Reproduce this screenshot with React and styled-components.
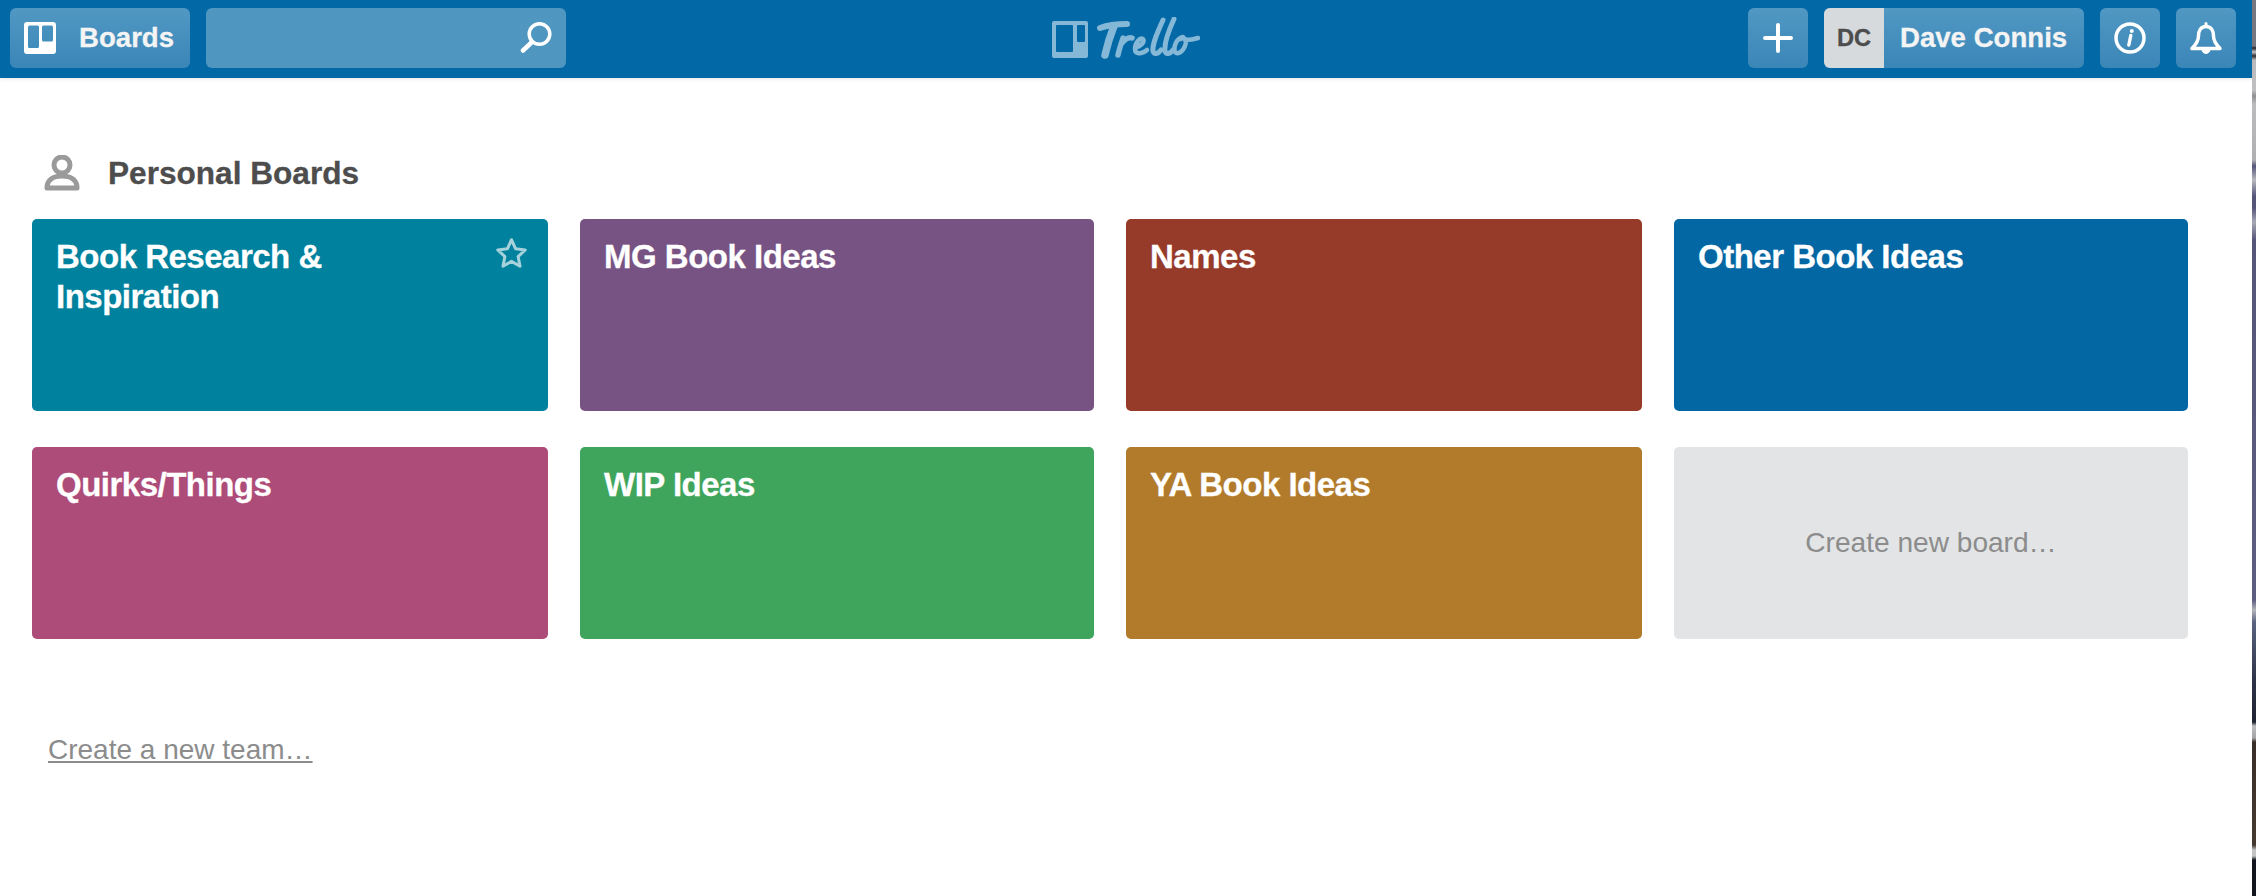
import React from 'react';
import styled, { createGlobalStyle } from 'styled-components';

const GlobalStyle = createGlobalStyle`
  html, body {
    margin: 0;
    padding: 0;
    height: 100%;
    overflow: hidden;
    background: #fff;
  }
  #root { height: 100%; }
  * { box-sizing: border-box; }
`

const Screen = styled.div`
  display: flex;
  width: 2256px;
  height: 896px;
  font-family: 'Liberation Sans', Arial, sans-serif;
`

const Page = styled.div`
  flex: 1;
  min-width: 0;
  display: flex;
  flex-direction: column;
`

const DesktopEdge = styled.div`
  width: 4px;
  flex-shrink: 0;
  background: linear-gradient(
    to bottom,
    #77777f 0, #77777f 46px, #26262c 48px, #c4c4c6 52px, #2c2c34 56px, #b9b9bc 60px,
    #c0c0c2 90px, #8f8f92 96px, #bcbcbe 104px, #b0b0b2 160px, #55557a 166px,
    #b8b8c0 180px, #55557a 196px, #55557a 208px, #a8a8b4 222px, #55557a 240px,
    #5d5d80 600px, #b4b4ba 610px, #5a6480 622px, #2e3448 680px, #1f2230 722px,
    #bcbcbe 726px, #a4a4a6 738px, #3a2f28 742px, #453930 845px, #c4c4c6 850px,
    #c4c4c6 856px, #14161f 860px, #14161f 896px
  );
`

const Header = styled.header`
  height: 78px;
  flex-shrink: 0;
  display: grid;
  grid-template-columns: 1fr auto 1fr;
  align-items: center;
  padding: 0 16px 2px 10px;
  background-color: #0268a6;
  box-shadow: 0 1px 4px rgba(0, 0, 0, 0.1);
`

const HeaderGroup = styled.div`
  display: flex;
  align-items: center;
  justify-content: ${props => props.$align};
  gap: 16px;
`

const HeaderButton = styled.div`
  display: flex;
  align-items: center;
  height: 60px;
  width: ${props => props.$width}px;
  justify-content: ${props => (props.$width === 60 ? 'center' : 'flex-start')};
  border-radius: 6px;
  color: #f4f4f4;
  font-size: 27.6px;
  font-weight: bold;
  -webkit-text-stroke: 0.3px #f4f4f4;
  background: linear-gradient(to bottom, #5198c3, #3a86b8);
  overflow: hidden;
`

const BoardsIcon = styled.svg`
  margin: 0 23px 0 14px;
`

const SearchBox = styled.div`
  display: flex;
  align-items: center;
  justify-content: flex-end;
  width: 360px;
  height: 60px;
  padding-right: 14px;
  border-radius: 6px;
  background: #4f96c1;
`

const Logo = styled.div`
  display: flex;
  align-items: center;
  margin-left: 6px;
`

const Avatar = styled.div`
  display: flex;
  align-items: center;
  justify-content: center;
  width: 60px;
  height: 60px;
  background: #d6dadc;
  color: #4d4d4d;
  font-size: 23.7px;
  font-weight: bold;
  -webkit-text-stroke: 0.3px #4d4d4d;
`

const UserName = styled.span`
  padding-left: 16px;
`

const Content = styled.main`
  flex: 1;
  padding: 0 0 0 32px;
`

const SectionTitle = styled.div`
  display: flex;
  align-items: center;
  height: 60px;
  margin-top: 65px;
  margin-bottom: 16px;
  padding-left: 12px;
  color: #4d4d4d;
  font-size: 31.6px;
  font-weight: bold;
  -webkit-text-stroke: 0.3px #4d4d4d;
`

const TitleText = styled.h2`
  margin: 0 0 0 28px;
  font: inherit;
`

const BoardGrid = styled.div`
  display: grid;
  grid-template-columns: 516px 514px 516px 514px;
  grid-auto-rows: 192px;
  gap: 36px 32px;
`

const BoardCard = styled.div`
  display: flex;
  justify-content: space-between;
  align-items: flex-start;
  padding: 18px 20px 20px 24px;
  border-radius: 5px;
  background: ${props => props.$color};
  color: #fff;
  font-size: 33px;
  font-weight: bold;
  letter-spacing: -0.5px;
  line-height: 40px;
  -webkit-text-stroke: 0.3px #fff;
`

const BoardName = styled.span`
  width: 300px;
  white-space: ${props => (props.$wrap ? 'normal' : 'nowrap')};
`

const NewBoard = styled.div`
  display: flex;
  align-items: center;
  justify-content: center;
  border-radius: 5px;
  background: #e2e4e6;
  color: #8c8c8c;
  font-size: 28.1px;
`

const TeamLink = styled.a`
  display: inline-block;
  margin: 93px 0 0 16px;
  color: #8c8c8c;
  font-size: 28px;
  line-height: 36px;
  text-decoration: underline;
`

const boards = [
  { name: 'Book Research & Inspiration', color: '#00819d', star: true },
  { name: 'MG Book Ideas', color: '#775384' },
  { name: 'Names', color: '#963a2a' },
  { name: 'Other Book Ideas', color: '#0267a3' },
  { name: 'Quirks/Things', color: '#ad4c79' },
  { name: 'WIP Ideas', color: '#40a55c' },
  { name: 'YA Book Ideas', color: '#b27b2c' },
]

const App = () => {
  return (
    <Screen>
      <GlobalStyle />
      <Page>
        <Header>
          <HeaderGroup $align="flex-start">
            <HeaderButton $width={180}>
              <BoardsIcon width="32" height="32" viewBox="0 0 32 32">
                <path fill="#fff" fillRule="evenodd" d="M3 0h26a3 3 0 0 1 3 3v26a3 3 0 0 1-3 3H3a3 3 0 0 1-3-3V3a3 3 0 0 1 3-3zM5.500 3.500a1.500 1.500 0 0 0-1.500 1.500v19.500a1.500 1.500 0 0 0 1.500 1.500h8a1.500 1.500 0 0 0 1.500-1.500V5a1.500 1.500 0 0 0-1.500-1.500zM19.500 3.500a1.500 1.500 0 0 0-1.500 1.500v13a1.500 1.500 0 0 0 1.500 1.500h8a1.500 1.500 0 0 0 1.500-1.500V5a1.500 1.500 0 0 0-1.500-1.500z" />
              </BoardsIcon>
              Boards
            </HeaderButton>
            <SearchBox>
              <svg width="32" height="32" viewBox="0 0 32 32" fill="none" stroke="#fff" strokeLinecap="round">
                <circle cx="19.500" cy="12" r="10.300" strokeWidth="3.500" />
                <path d="M11.500 20.500L3 28.500" strokeWidth="4.500" />
              </svg>
            </SearchBox>
          </HeaderGroup>
          <Logo>
            <svg width="148" height="42" viewBox="0 0 148 42" fill="#85b7d6">
              <path fillRule="evenodd" d="M2 4h32a2 2 0 0 1 2 2v33a2 2 0 0 1-2 2H2a2 2 0 0 1-2-2V6a2 2 0 0 1 2-2zM5 8a1 1 0 0 0-1 1v25a1 1 0 0 0 1 1h15a1 1 0 0 0 1-1V9a1 1 0 0 0-1-1zM26 8a1 1 0 0 0-1 1v15a1 1 0 0 0 1 1h6a1 1 0 0 0 1-1V9a1 1 0 0 0-1-1z" />
              <g fill="none" stroke="#85b7d6" strokeLinecap="round" strokeLinejoin="round">
                <path d="M48 11C56 8 66 7 75 7" strokeWidth="6" />
                <path d="M62 9C58 19 55 29 53 38" strokeWidth="7.500" />
                <path d="M71 21C69 27 67 33 66 38M69 27C73 22 77 20 80 21" strokeWidth="5.500" />
                <path d="M83 31C89 29 93 25 91 22C88 20 83 26 83 32C83 37 89 38 95 33" strokeWidth="4.500" />
                <path d="M111 3C106 14 100 27 101 34C102 38 106 37 109 33" strokeWidth="5" />
                <path d="M122 2C117 13 112 27 113 34C114 38 118 37 121 33" strokeWidth="5" />
                <path d="M131 20C125 21 121 29 123 35C126 39 133 33 134 25C134 21 131 20 129 22M133 23C138 23 143 22 146 21" strokeWidth="4.500" />
              </g>
            </svg>
          </Logo>
          <HeaderGroup $align="flex-end">
            <HeaderButton $width={60}>
              <svg width="30" height="30" viewBox="0 0 30 30" stroke="#fff" strokeWidth="4" strokeLinecap="round">
                <path d="M15 2v26M2 15h26" />
              </svg>
            </HeaderButton>
            <HeaderButton $width={260}>
              <Avatar>DC</Avatar>
              <UserName>Dave Connis</UserName>
            </HeaderButton>
            <HeaderButton $width={60}>
              <svg width="32" height="32" viewBox="0 0 32 32" fill="none">
                <circle cx="16" cy="16" r="14" stroke="#fff" strokeWidth="3.500" />
                <path d="M16.800 13.500L14.800 23" stroke="#fff" strokeWidth="3.400" strokeLinecap="round" />
                <circle cx="17.800" cy="9" r="2" fill="#fff" />
              </svg>
            </HeaderButton>
            <HeaderButton $width={60}>
              <svg width="32" height="32" viewBox="0 0 32 32" fill="none" stroke="#fff" strokeLinejoin="round" strokeLinecap="round">
                <path d="M16 4.500C10.500 4.500 8.500 9 8.500 14C8.500 19 6 22.500 2 26.500H30C26 22.500 23.500 19 23.500 14C23.500 9 21.500 4.500 16 4.500Z" strokeWidth="3.500" />
                <path d="M16 1.500v3" strokeWidth="3" />
                <path d="M12 27.500a4 4 0 0 0 8 0z" fill="#fff" strokeWidth="1" />
              </svg>
            </HeaderButton>
          </HeaderGroup>
        </Header>
        <Content>
          <SectionTitle>
            <svg width="36" height="36" viewBox="0 0 36 36" fill="none" stroke="#9a9a9a" strokeWidth="5" strokeLinejoin="round">
              <ellipse cx="18" cy="10" rx="8" ry="8" />
              <path d="M3 33C3 25 9 21 18 21C27 21 33 25 33 33Z" />
            </svg>
            <TitleText>Personal Boards</TitleText>
          </SectionTitle>
          <BoardGrid>
            {boards.map(board => (
              <BoardCard key={board.name} $color={board.color}>
                <BoardName $wrap={board.star}>{board.name}</BoardName>
                {board.star && (
                  <svg width="33" height="33" viewBox="0 0 24 24" fill="none" stroke="#a6d2dc" strokeWidth="2.200" strokeLinejoin="round">
                    <path d="M12 2l3 6.600 7 .8-5.200 4.800 1.400 7.100L12 17.700l-6.200 3.600 1.400-7.100L2 9.400l7-.8z" />
                  </svg>
                )}
              </BoardCard>
            ))}
            <NewBoard>Create new board…</NewBoard>
          </BoardGrid>
          <TeamLink>Create a new team…</TeamLink>
        </Content>
      </Page>
      <DesktopEdge />
    </Screen>
  )
}

export default App;
